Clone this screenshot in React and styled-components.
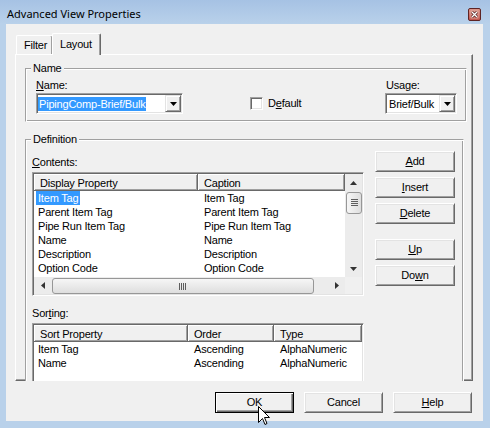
import React from "react";
import styled, { createGlobalStyle } from "styled-components";

const GlobalStyle = createGlobalStyle`
  html, body { margin: 0; padding: 0; }
  body {
    background: #b9d1ea;
    font-family: "Liberation Sans", Arial, sans-serif;
    font-size: 11px;
    color: #000;
    letter-spacing: -0.2px;
  }
  *, *::before, *::after { box-sizing: border-box; }
  u { text-decoration: underline; text-underline-offset: 1px; }
`;

const Window = styled.div`
  width: 490px;
  height: 428px;
  display: flex;
  flex-direction: column;
  background: #b9d1ea;
  overflow: hidden;
`;

const TitleBar = styled.div`
  height: 24px;
  flex: none;
  display: flex;
  align-items: flex-start;
  padding: 0 9px 0 7px;
  background: linear-gradient(#a6c2e4, #b9d1ea);
`;

const Title = styled.div`
  flex: 1;
  margin-top: 7px;
  font-family: "Noto Sans", "Open Sans", sans-serif;
  font-size: 11px;
  line-height: 14px;
  letter-spacing: 0;
`;

const CloseBox = styled.div`
  width: 13px;
  height: 13px;
  margin-top: 8px;
  display: flex;
`;

const Client = styled.div`
  position: relative;
  margin: 0 7px 7px 6px;
  height: 397px;
  background: #f0f0f0;
  display: flex;
  flex-direction: column;
`;

const TabStrip = styled.div`
  position: relative;
  z-index: 1;
  height: 30px;
  flex: none;
  display: flex;
  align-items: flex-end;
  padding-left: 10px;
`;

const Tab = styled.div`
  width: ${(p) => (p.$active ? 49 : 37)}px;
  height: ${(p) => (p.$active ? 22 : 19)}px;
  margin-bottom: ${(p) => (p.$active ? -1 : 0)}px;
  margin-right: ${(p) => (p.$active ? 0 : -1)}px;
  padding: ${(p) => (p.$active ? "4px 0 0 7px" : "3px 0 0 7px")};
  line-height: 13px;
  background: #f0f0f0;
  border: 1px solid;
  border-color: #fff #696969 transparent #fff;
  border-bottom: none;
  border-radius: 2px 2px 0 0;
  box-shadow: inset -1px 0 0 #a0a0a0;
`;

const Panel = styled.div`
  margin-left: 9px;
  width: 458px;
  height: 327px;
  flex: none;
  border: 1px solid;
  border-color: #fff #696969 #696969 #fff;
  box-shadow: inset -1px -1px 0 #a0a0a0;
  padding: 7px 0 0 9px;
  display: flex;
  flex-direction: column;
`;

const GroupBox = styled.div`
  width: ${(p) => p.$w}px;
  height: ${(p) => (p.$h ? `${p.$h}px` : "auto")};
  margin-top: ${(p) => p.$mt || 0}px;
  margin-bottom: ${(p) => p.$mb || 0}px;
  flex: none;
  display: flex;
  flex-direction: column;
`;

const GroupHeader = styled.div`
  height: 13px;
  flex: none;
  display: flex;
  background: #f0f0f0;
`;

const GroupTick = styled.div`
  width: 6px;
  height: 7px;
  align-self: flex-end;
  border-top: 1px solid #a0a0a0;
  border-left: 1px solid #a0a0a0;
  box-shadow: inset 1px 1px 0 #fff;
`;

const GroupLegend = styled.div`
  padding: 0 2px;
  line-height: 13px;
`;

const GroupRule = styled.div`
  flex: 1;
  height: 7px;
  align-self: flex-end;
  border-top: 1px solid #a0a0a0;
  border-right: 1px solid #fff;
  box-shadow: inset 0 1px 0 #fff, inset -1px 0 0 #a0a0a0;
`;

const GroupBody = styled.div`
  flex: 1;
  min-height: 0;
  background: #f0f0f0;
  border-left: 1px solid #a0a0a0;
  border-right: 1px solid #fff;
  border-bottom: ${(p) => (p.$open ? "none" : "1px solid #fff")};
  box-shadow: inset 1px 0 0 #fff, inset -1px 0 0 #a0a0a0
    ${(p) => (p.$open ? "" : ", inset 0 -1px 0 #a0a0a0")};
  padding: ${(p) => p.$pad};
  overflow: hidden;
`;

const NameRow = styled.div`
  display: flex;
  align-items: flex-end;
`;

const Field = styled.div`
  display: flex;
  flex-direction: column;
  margin-left: ${(p) => p.$ml || "0"};
`;

const Label = styled.div`
  line-height: 13px;
  height: 13px;
  margin-top: ${(p) => p.$mt || 0}px;
  margin-bottom: ${(p) => p.$mb || 0}px;
  padding-left: ${(p) => p.$pl || 0}px;
  white-space: nowrap;
`;

const Combo = styled.div`
  width: ${(p) => p.$w}px;
  height: 21px;
  border: 1px solid;
  border-color: #a0a0a0 #fff #fff #a0a0a0;
  box-shadow: inset 1px 1px 0 #696969, inset -1px -1px 0 #e3e3e3;
  padding: 1px;
  background: #fff;
  display: flex;
`;

const ComboText = styled.div`
  flex: 1;
  display: flex;
  align-items: center;
  padding-left: ${(p) => p.$pl || 0}px;
  white-space: nowrap;
  overflow: hidden;
`;

const Highlight = styled.span`
  background: #3399ff;
  color: #fff;
  line-height: 14px;
  padding: 0 1px;
`;

const DropButton = styled.div`
  width: 16px;
  background: #f0f0f0;
  border: 1px solid;
  border-color: #e3e3e3 #696969 #696969 #e3e3e3;
  box-shadow: inset 1px 1px 0 #fff, inset -1px -1px 0 #a0a0a0;
  display: flex;
  align-items: center;
  justify-content: center;
`;

const CheckRow = styled.div`
  height: 21px;
  margin-left: 67px;
  display: flex;
  align-items: center;
  gap: 5px;
  line-height: 13px;
`;

const CheckBox = styled.div`
  width: 13px;
  height: 13px;
  border: 1px solid;
  border-color: #a0a0a0 #fff #fff #a0a0a0;
  box-shadow: inset 1px 1px 0 #696969, inset -1px -1px 0 #e3e3e3;
  background: #fff;
`;

const DefGrid = styled.div`
  display: grid;
  grid-template-columns: 332px 80px;
  column-gap: 11px;
  align-items: start;
`;

const Column = styled.div`
  display: flex;
  flex-direction: column;
  padding-top: ${(p) => p.$pt || 0}px;
`;

const ListView = styled.div`
  width: 332px;
  height: ${(p) => p.$h}px;
  flex: none;
  margin-top: ${(p) => p.$mt || 0}px;
  border: 1px solid;
  border-color: #a0a0a0 #fff #fff #a0a0a0;
  box-shadow: inset 1px 1px 0 #696969, inset -1px -1px 0 #e3e3e3;
  padding: 1px;
  background: #fff;
  display: grid;
  grid-template-columns: ${(p) => (p.$scroll ? "1fr 17px" : "1fr")};
  grid-template-rows: ${(p) => (p.$scroll ? "1fr 17px" : "1fr")};
`;

const ListBody = styled.div`
  min-width: 0;
  overflow: hidden;
  background: #fff;
`;

const HeaderRow = styled.div`
  display: grid;
  grid-template-columns: ${(p) => p.$cols};
  height: 17px;
`;

const HeaderCell = styled.div`
  padding: 2px 0 0 6px;
  line-height: 14px;
  background: #f0f0f0;
  border-right: 1px solid #696969;
  border-bottom: 1px solid #696969;
  box-shadow: inset 1px 1px 0 #fff, inset -1px -1px 0 #a0a0a0;
  white-space: nowrap;
  overflow: hidden;
`;

const Row = styled.div`
  display: grid;
  grid-template-columns: ${(p) => p.$cols};
  height: 14px;
  line-height: 14px;
`;

const Cell = styled.div`
  padding-left: ${(p) => (p.$first ? 2 : 6)}px;
  white-space: nowrap;
  overflow: hidden;
`;

const ItemLabel = styled.span`
  display: inline-block;
  padding: 0 2px;
  background: ${(p) => (p.$selected ? "#3399ff" : "transparent")};
  color: ${(p) => (p.$selected ? "#fff" : "#000")};
`;

const VScroll = styled.div`
  display: flex;
  flex-direction: column;
  background: #ececec;
`;

const HScroll = styled.div`
  display: flex;
  background: #ececec;
`;

const ScrollArrow = styled.div`
  width: 17px;
  height: 17px;
  flex: none;
  display: flex;
  align-items: center;
  justify-content: center;
`;

const Thumb = styled.div`
  flex: none;
  width: ${(p) => (p.$vertical ? "16px" : `${p.$len}px`)};
  height: ${(p) => (p.$vertical ? `${p.$len}px` : "16px")};
  margin: ${(p) => (p.$vertical ? "1px 0 0 1px" : "1px 0 0 1px")};
  border: 1px solid #979797;
  border-radius: 3px;
  background: ${(p) =>
    p.$vertical
      ? "linear-gradient(to right, #f6f6f6, #dedede)"
      : "linear-gradient(#f6f6f6, #dedede)"};
  display: flex;
  align-items: center;
  justify-content: center;
`;

const Spacer = styled.div`
  flex: 1;
`;

const Corner = styled.div`
  background: #f0f0f0;
`;

const Button = styled.div`
  width: ${(p) => p.$w || 80}px;
  height: 21px;
  flex: none;
  margin-top: ${(p) => p.$mt || 0}px;
  background: #f0f0f0;
  border: 1px solid;
  border-color: ${(p) => (p.$default ? "#000" : "#fff #696969 #696969 #fff")};
  box-shadow: ${(p) =>
    p.$default
      ? "inset 1px 1px 0 #fff, inset -1px -1px 0 #696969, inset -2px -2px 0 #a0a0a0"
      : "inset 1px 1px 0 #e3e3e3, inset -1px -1px 0 #a0a0a0"};
  text-align: center;
  line-height: 19px;
  white-space: nowrap;
`;

const ButtonRow = styled.div`
  display: flex;
  justify-content: flex-end;
  gap: 10px;
  padding-right: 11px;
  margin-top: 11px;
`;

const Cursor = styled.div`
  position: absolute;
  left: 252px;
  top: 382px;
  width: 12px;
  height: 19px;
  display: flex;
`;

const DownTri = () => (
  <svg width="7" height="4" viewBox="0 0 7 4">
    <path d="M0 0H7L3.5 4Z" fill="#000" />
  </svg>
);

const Arrow = ({ dir }) => {
  const d = {
    up: "M0 4L3.5 0L7 4Z",
    down: "M0 0H7L3.5 4Z",
    left: "M4 0V7L0 3.5Z",
    right: "M0 0V7L4 3.5Z",
  }[dir];
  const vert = dir === "up" || dir === "down";
  return (
    <svg width={vert ? 7 : 4} height={vert ? 4 : 7} viewBox={vert ? "0 0 7 4" : "0 0 4 7"}>
      <path d={d} fill="#333" />
    </svg>
  );
};

const Grip = ({ vertical }) =>
  vertical ? (
    <svg width="7" height="8" viewBox="0 0 7 8">
      {[0, 2, 4, 6].map((y) => (
        <rect key={y} x="0" y={y} width="7" height="1" fill="#5e5e5e" />
      ))}
    </svg>
  ) : (
    <svg width="8" height="7" viewBox="0 0 8 7">
      {[0, 2, 4, 6].map((x) => (
        <rect key={x} x={x} y="0" width="1" height="7" fill="#5e5e5e" />
      ))}
    </svg>
  );

const Group = ({ title, w, h, mt, mb, pad, open, children }) => (
  <GroupBox $w={w} $h={h} $mt={mt} $mb={mb}>
    <GroupHeader>
      <GroupTick />
      <GroupLegend>{title}</GroupLegend>
      <GroupRule />
    </GroupHeader>
    <GroupBody $pad={pad} $open={open}>
      {children}
    </GroupBody>
  </GroupBox>
);

const contents = [
  ["Item Tag", "Item Tag"],
  ["Parent Item Tag", "Parent Item Tag"],
  ["Pipe Run Item Tag", "Pipe Run Item Tag"],
  ["Name", "Name"],
  ["Description", "Description"],
  ["Option Code", "Option Code"],
];

const sorting = [
  ["Item Tag", "Ascending", "AlphaNumeric"],
  ["Name", "Ascending", "AlphaNumeric"],
];

export default function App() {
  return (
    <>
      <GlobalStyle />
      <Window>
        <TitleBar>
          <Title>Advanced View Properties</Title>
          <CloseBox>
            <svg width="13" height="13" viewBox="0 0 13 13">
              <defs>
                <linearGradient id="closeGrad" x1="0" y1="0" x2="0" y2="1">
                  <stop offset="0" stopColor="#dd9a8e" />
                  <stop offset="1" stopColor="#c1524a" />
                </linearGradient>
              </defs>
              <rect x="0.5" y="0.5" width="12" height="12" rx="1.5" fill="url(#closeGrad)" stroke="#5e2424" />
              <rect x="3" y="3" width="7" height="7" fill="none" stroke="#e9c2bb" strokeWidth="0.6" />
              <path d="M4 4L9 9M9 4L4 9" stroke="#4a1c1c" strokeWidth="2.6" />
              <path d="M4 4L9 9M9 4L4 9" stroke="#fff" strokeWidth="1.3" />
            </svg>
          </CloseBox>
        </TitleBar>
        <Client>
          <TabStrip>
            <Tab>Filter</Tab>
            <Tab $active>Layout</Tab>
          </TabStrip>
          <Panel>
            <Group title="Name" w={442} pad="4px 9px 7px 10px">
              <NameRow>
                <Field>
                  <Label $mb={1}>
                    <u>N</u>ame:
                  </Label>
                  <Combo $w={147}>
                    <ComboText>
                      <Highlight>PipingComp-Brief/Bulk</Highlight>
                    </ComboText>
                    <DropButton>
                      <DownTri />
                    </DropButton>
                  </Combo>
                </Field>
                <CheckRow>
                  <CheckBox />
                  <span>
                    D<u>e</u>fault
                  </span>
                </CheckRow>
                <Field $ml="auto">
                  <Label $mb={1} $pl={1}>
                    Usage:
                  </Label>
                  <Combo $w={72}>
                    <ComboText $pl={2}>Brief/Bulk</ComboText>
                    <DropButton>
                      <DownTri />
                    </DropButton>
                  </Combo>
                </Field>
              </NameRow>
            </Group>

            <Group title="Definition" w={439} h={248} mt={11} mb={-1} pad="0 0 0 6px" open>
              <DefGrid>
                <Column>
                  <Label $mt={10}>
                    <u>C</u>ontents:
                  </Label>
                  <ListView $h={124} $mt={3} $scroll>
                    <ListBody>
                      <HeaderRow $cols="164px 1fr">
                        <HeaderCell>Display Property</HeaderCell>
                        <HeaderCell>Caption</HeaderCell>
                      </HeaderRow>
                      {contents.map(([a, b], i) => (
                        <Row key={a} $cols="164px 1fr">
                          <Cell $first>
                            <ItemLabel $selected={i === 0}>{a}</ItemLabel>
                          </Cell>
                          <Cell>{b}</Cell>
                        </Row>
                      ))}
                    </ListBody>
                    <VScroll>
                      <ScrollArrow>
                        <Arrow dir="up" />
                      </ScrollArrow>
                      <Thumb $vertical $len={22}>
                        <Grip vertical />
                      </Thumb>
                      <Spacer />
                      <ScrollArrow>
                        <Arrow dir="down" />
                      </ScrollArrow>
                    </VScroll>
                    <HScroll>
                      <ScrollArrow>
                        <Arrow dir="left" />
                      </ScrollArrow>
                      <Thumb $len={262}>
                        <Grip />
                      </Thumb>
                      <Spacer />
                      <ScrollArrow>
                        <Arrow dir="right" />
                      </ScrollArrow>
                    </HScroll>
                    <Corner />
                  </ListView>
                  <Label $mt={11}>
                    Sor<u>t</u>ing:
                  </Label>
                  <ListView $h={70} $mt={3}>
                    <ListBody>
                      <HeaderRow $cols="154px 86px 1fr">
                        <HeaderCell>Sort Property</HeaderCell>
                        <HeaderCell>Order</HeaderCell>
                        <HeaderCell>Type</HeaderCell>
                      </HeaderRow>
                      {sorting.map(([a, b, c]) => (
                        <Row key={a} $cols="154px 86px 1fr">
                          <Cell $first>
                            <ItemLabel>{a}</ItemLabel>
                          </Cell>
                          <Cell>{b}</Cell>
                          <Cell>{c}</Cell>
                        </Row>
                      ))}
                    </ListBody>
                  </ListView>
                </Column>
                <Column $pt={5}>
                  <Button>
                    <u>A</u>dd
                  </Button>
                  <Button $mt={5}>
                    <u>I</u>nsert
                  </Button>
                  <Button $mt={5}>
                    <u>D</u>elete
                  </Button>
                  <Button $mt={15}>
                    <u>U</u>p
                  </Button>
                  <Button $mt={5}>
                    Do<u>w</u>n
                  </Button>
                </Column>
              </DefGrid>
            </Group>
          </Panel>
          <ButtonRow>
            <Button $w={79} $default>
              OK
            </Button>
            <Button $w={79}>Cancel</Button>
            <Button $w={79}>
              <u>H</u>elp
            </Button>
          </ButtonRow>
          <Cursor>
            <svg width="12" height="19" viewBox="0 0 12 19">
              <path
                d="M0.5 0.5V16.5L4.5 12.5L7 18.5L9 17.5L6.5 11.5H11.5Z"
                fill="#fff"
                stroke="#000"
                strokeLinejoin="miter"
              />
            </svg>
          </Cursor>
        </Client>
      </Window>
    </>
  );
}
